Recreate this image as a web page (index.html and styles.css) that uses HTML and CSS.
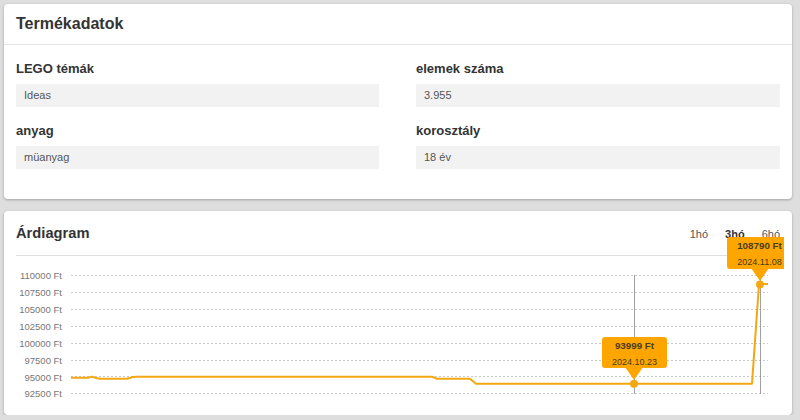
FILE: index.html
```html
<!DOCTYPE html>
<html lang="hu">
<head>
<meta charset="utf-8">
<title>Termékadatok</title>
<link rel="stylesheet" href="styles.css">
</head>
<body>
<section class="card">
  <header class="card-head">
    <h2 class="card-title">Termékadatok</h2>
  </header>
  <div class="fields">
    <div class="field">
      <div class="field-label">LEGO témák</div>
      <div class="field-value">Ideas</div>
    </div>
    <div class="field">
      <div class="field-label">elemek száma</div>
      <div class="field-value">3.955</div>
    </div>
    <div class="field">
      <div class="field-label">anyag</div>
      <div class="field-value">müanyag</div>
    </div>
    <div class="field">
      <div class="field-label">korosztály</div>
      <div class="field-value">18 év</div>
    </div>
  </div>
</section>

<section class="card chart-card">
  <header class="chart-head">
    <h2 class="chart-title">Árdiagram</h2>
    <nav class="tabs">
      <span class="tab">1hó</span>
      <span class="tab active">3hó</span>
      <span class="tab">6hó</span>
    </nav>
  </header>
  <svg class="chart" width="788" height="159" viewBox="4 256 788 159">
    <defs>
      <clipPath id="clip"><rect x="4" y="220" width="780" height="200"/></clipPath>
    </defs>
    <g class="grid">
      <line x1="71" x2="768" y1="275.5" y2="275.5"/>
      <line x1="71" x2="768" y1="292.5" y2="292.5"/>
      <line x1="71" x2="768" y1="309.5" y2="309.5"/>
      <line x1="71" x2="768" y1="326.5" y2="326.5"/>
      <line x1="71" x2="768" y1="343.5" y2="343.5"/>
      <line x1="71" x2="768" y1="360.5" y2="360.5"/>
      <line x1="71" x2="768" y1="376.5" y2="376.5"/>
      <line x1="71" x2="768" y1="393.5" y2="393.5"/>
    </g>
    <g class="ylabels">
      <text x="62" y="279">110000 Ft</text>
      <text x="62" y="296">107500 Ft</text>
      <text x="62" y="313">105000 Ft</text>
      <text x="62" y="330">102500 Ft</text>
      <text x="62" y="347">100000 Ft</text>
      <text x="62" y="364">97500 Ft</text>
      <text x="62" y="380.5">95000 Ft</text>
      <text x="62" y="397">92500 Ft</text>
    </g>
    <g class="cross">
      <line x1="634.5" x2="634.5" y1="275" y2="394"/>
      <line x1="760.5" x2="760.5" y1="275" y2="394"/>
    </g>
    <path class="series" d="M71 377.7 L88 377.7 L92 376.6 L97 378.3 L100 378.8 L127 378.8 L132 377.2 L136 376.7 L432 376.7 L437 378.7 L470 378.7 L476 383.8 L752 383.8 L759 284 L768 284"/>
    <circle class="dot" cx="634" cy="383.8" r="4"/>
    <circle class="dot" cx="760" cy="284.5" r="4"/>
    <g class="tip">
      <rect x="602" y="337" width="65" height="31" rx="3"/>
      <path d="M625 367 L643 367 L634 380 Z"/>
      <text class="tip-price" x="634.5" y="348.5">93999 Ft</text>
      <text class="tip-date" x="634.5" y="364.5">2024.10.23</text>
    </g>
    <g class="tip" clip-path="url(#clip)">
      <rect x="727" y="237" width="65" height="32" rx="3"/>
      <path d="M751 268 L769 268 L760 281 Z"/>
      <text class="tip-price" x="759.5" y="249">108790 Ft</text>
      <text class="tip-date" x="759.5" y="265">2024.11.08</text>
    </g>
  </svg>
</section>
</body>
</html>
```

FILE: styles.css
```css
html, body {
  margin: 0;
  padding: 0;
}

body {
  background: #dedede;
  font-family: "Liberation Sans", Arial, sans-serif;
  color: #333;
  padding: 4px 8px 0 4px;
  width: 788px;
}

.card {
  background: #fff;
  border-radius: 4px;
  box-shadow: 0 1px 3px rgba(0, 0, 0, 0.28);
}

.card-head {
  padding: 10px 12px;
  border-bottom: 1px solid #e6e6e6;
}

.card-title {
  margin: 0;
  font-size: 16px;
  line-height: 20px;
  font-weight: bold;
  color: #333;
}

.fields {
  display: grid;
  grid-template-columns: 363px 364px;
  column-gap: 37px;
  row-gap: 16px;
  padding: 16px 12px 30px;
}

.field-label {
  font-size: 13px;
  line-height: 16px;
  font-weight: bold;
  color: #333;
  margin-bottom: 7px;
}

.field-value {
  background: #f2f2f2;
  height: 23px;
  line-height: 23px;
  padding: 0 8px;
  font-size: 11px;
  color: #555;
}

.chart-card {
  margin-top: 12px;
}

.chart-head {
  display: flex;
  align-items: baseline;
  justify-content: space-between;
  margin: 0 12px;
  padding: 12px 0;
  border-bottom: 1px solid #e0e0e0;
}

.chart-title {
  margin: 0;
  font-size: 14.7px;
  line-height: 20px;
  font-weight: bold;
  color: #333;
}

.tabs {
  display: flex;
  gap: 17px;
}

.tab {
  font-size: 11px;
  color: #555;
}

.tab.active {
  font-weight: bold;
  color: #333;
}

.chart {
  display: block;
  overflow: visible;
}

.grid line {
  stroke: #c8c8c8;
  stroke-width: 1;
  stroke-dasharray: 2 2;
}

.ylabels text {
  font-size: 9.5px;
  fill: #777;
  text-anchor: end;
}

.cross line {
  stroke: #a0a0a0;
  stroke-width: 1;
}

.series {
  fill: none;
  stroke: #f3a712;
  stroke-width: 2;
  stroke-linejoin: round;
}

.dot {
  fill: #f3a712;
}

.tip rect,
.tip path {
  fill: #ffa500;
}

.tip text {
  text-anchor: middle;
  fill: #4a3c20;
}

.tip-price {
  font-size: 9.8px;
  font-weight: bold;
}

.tip-date {
  font-size: 9px;
}
```
